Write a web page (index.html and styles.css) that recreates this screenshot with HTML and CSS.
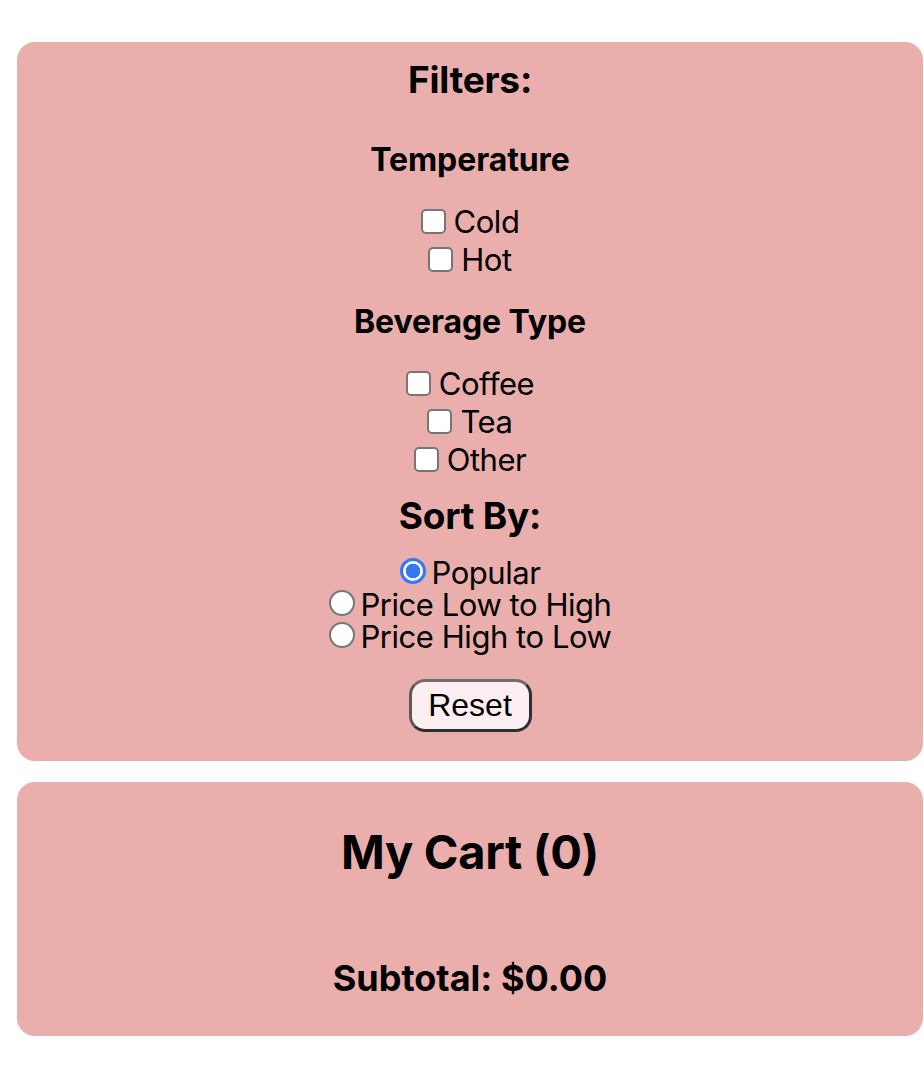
FILE: index.html
```html
<!DOCTYPE html>
<html lang="en">
<head>
<meta charset="utf-8">
<title>Filters and Cart</title>
<link rel="stylesheet" href="styles.css">
</head>
<body>
<main class="page">
  <section class="card filters">
    <h3 class="title">Filters:</h3>
    <h4 class="group-title">Temperature</h4>
    <div class="group">
      <label class="opt"><input type="checkbox" class="check"><span class="txt">Cold</span></label>
      <label class="opt"><input type="checkbox" class="check"><span class="txt">Hot</span></label>
    </div>
    <h4 class="group-title">Beverage Type</h4>
    <div class="group">
      <label class="opt"><input type="checkbox" class="check"><span class="txt">Coffee</span></label>
      <label class="opt"><input type="checkbox" class="check"><span class="txt">Tea</span></label>
      <label class="opt"><input type="checkbox" class="check"><span class="txt">Other</span></label>
    </div>
    <h3 class="title sort-title">Sort By:</h3>
    <div class="radios">
      <label class="ropt"><input type="radio" name="sort" class="radio" checked><span class="txt">Popular</span></label>
      <label class="ropt"><input type="radio" name="sort" class="radio"><span class="txt">Price Low to High</span></label>
      <label class="ropt"><input type="radio" name="sort" class="radio"><span class="txt">Price High to Low</span></label>
    </div>
    <button class="reset" type="button">Reset</button>
  </section>
  <section class="card cart">
    <h2 class="cart-title">My Cart (0)</h2>
    <h3 class="subtotal">Subtotal: $0.00</h3>
  </section>
</main>
</body>
</html>
```
FILE: styles.css
```css
html, body {
  margin: 0;
  padding: 0;
  background: #ffffff;
}
body {
  font-family: Inter, "Noto Sans", "Liberation Sans", sans-serif;
  color: #000000;
}
.page {
  display: flex;
  flex-direction: column;
  gap: 21px;
  padding: 42px 1px 0 17px;
}
.card {
  background: #eaaeac;
  border-radius: 18px;
  display: flex;
  flex-direction: column;
  align-items: center;
}
.filters {
  padding: 16px 0 29px;
}
.title {
  margin: 0;
  font-size: 37px;
  line-height: 44px;
  font-weight: 700;
  letter-spacing: -0.2px;
}
.group-title {
  margin: 38px 0 0;
  font-size: 32px;
  line-height: 40px;
  font-weight: 700;
  letter-spacing: -0.1px;
}
.group-title + .group {
  margin-top: 23px;
}
.group + .group-title {
  margin-top: 23px;
}
.group {
  display: flex;
  flex-direction: column;
  align-items: center;
}
.txt {
  display: block;
  font-size: 31px;
  letter-spacing: -0.45px;
}
.opt {
  display: flex;
  align-items: center;
  gap: 8px;
  height: 38px;
}
.opt .txt {
  line-height: 38px;
}
.check {
  appearance: none;
  -webkit-appearance: none;
  margin: 0;
  width: 25px;
  height: 25px;
  box-sizing: border-box;
  border: 2px solid #767676;
  border-radius: 5px;
  background: #ffffff;
  position: relative;
  top: -1px;
}
.sort-title {
  margin-top: 15px;
}
.radios {
  margin-top: 19px;
  display: flex;
  flex-direction: column;
  align-items: center;
}
.ropt {
  display: flex;
  align-items: center;
  gap: 6px;
  height: 32px;
}
.ropt .txt {
  line-height: 32px;
}
.radio {
  appearance: none;
  -webkit-appearance: none;
  margin: 0;
  width: 26px;
  height: 26px;
  box-sizing: border-box;
  border: 2px solid #767676;
  border-radius: 50%;
  background: #ffffff;
  position: relative;
  top: -2px;
}
.radio:checked {
  border: 3px solid #3478f6;
  background: radial-gradient(circle, #3478f6 0 7px, #ffffff 7.6px);
}
.reset {
  margin-top: 26px;
  width: 123px;
  height: 53px;
  box-sizing: border-box;
  border: 3px solid #2f2f2f;
  border-top-color: #6e6e6e;
  border-left-color: #5a5a5a;
  border-radius: 16px;
  background: #fdeef1;
  font-family: "Liberation Sans", Arial, sans-serif;
  font-size: 32px;
  color: #000000;
  padding: 0;
}
.cart {
  padding: 41px 0 36px;
}
.cart-title {
  margin: 0;
  font-size: 47px;
  line-height: 58px;
  font-weight: 700;
  letter-spacing: -0.3px;
}
.subtotal {
  margin: 75px 0 0;
  font-size: 36px;
  line-height: 44px;
  font-weight: 700;
}
```
